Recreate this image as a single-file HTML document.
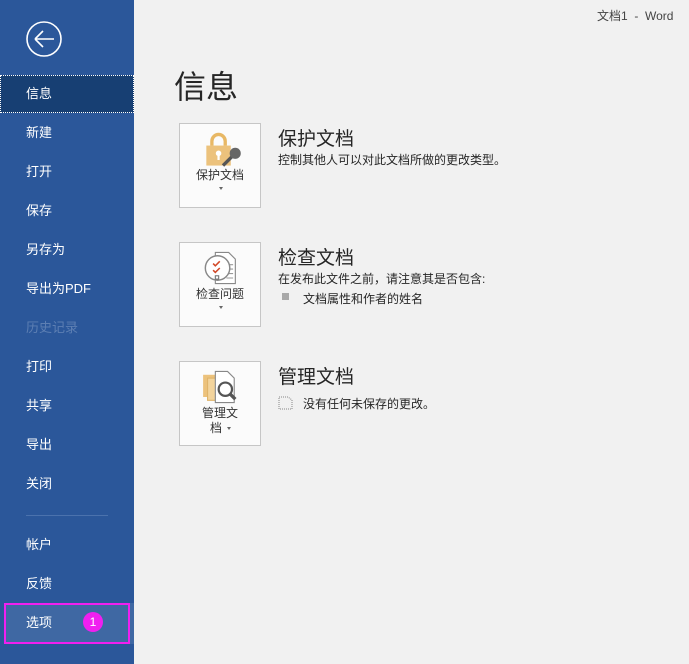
<!DOCTYPE html>
<html><head><meta charset="utf-8"><style>
*{margin:0;padding:0;box-sizing:border-box}
body{width:689px;height:664px;overflow:hidden;background:#f1f1f1;font-family:"Liberation Sans","Noto Sans CJK SC",sans-serif;position:relative;color:#262626}
#side{position:absolute;left:0;top:0;width:134px;height:664px;background:#2b579a}
.it{position:absolute;left:26px;font-size:13px;color:#fff;line-height:16px}
#sel{position:absolute;left:0;top:75px;width:134px;height:38px;background:#173f73;border:1px dotted #fff}
.t{position:absolute;white-space:nowrap}
.box{position:absolute;left:179px;width:82px;height:85px;background:#fbfbfb;border:1px solid #c6c6c6}
.bl{position:absolute;left:0;width:80px;text-align:center;font-size:12px;color:#333;line-height:14px}
.arr{position:absolute;left:39px;width:0;height:0;border-left:2.5px solid transparent;border-right:2.5px solid transparent;border-top:3px solid #666}
h2{position:absolute;left:278px;font-size:19px;font-weight:normal;color:#262626}
.d{position:absolute;font-size:12px;color:#262626;white-space:nowrap}
</style></head><body>
<div id="side">
<svg style="position:absolute;left:26px;top:21px" width="36" height="36" viewBox="0 0 36 36"><circle cx="18" cy="18" r="17" fill="none" stroke="#fff" stroke-width="1.6"/><path d="M9 18H28M9 18L17 10M9 18L17 26" fill="none" stroke="#fff" stroke-width="1.6"/></svg>
<div id="sel"></div>
<div class="it" style="top:86px">信息</div>
<div class="it" style="top:125px">新建</div>
<div class="it" style="top:164px">打开</div>
<div class="it" style="top:203px">保存</div>
<div class="it" style="top:242px">另存为</div>
<div class="it" style="top:281px">导出为PDF</div>
<div class="it" style="top:320px;color:#5d7fb3">历史记录</div>
<div class="it" style="top:359px">打印</div>
<div class="it" style="top:398px">共享</div>
<div class="it" style="top:437px">导出</div>
<div class="it" style="top:476px">关闭</div>
<div style="position:absolute;left:26px;top:515px;width:82px;height:1px;background:#4b72ad"></div>
<div class="it" style="top:537px">帐户</div>
<div class="it" style="top:576px">反馈</div>
<div style="position:absolute;left:4px;top:603px;width:130px;height:41px;background:#3f68a3"></div>
<div style="position:absolute;left:4px;top:603px;width:126px;height:41px;border:2px solid #f01ff0"></div>
<div class="it" style="top:615px">选项</div>
<div style="position:absolute;left:83px;top:612px;width:20px;height:20px;border-radius:50%;background:#f01ff0;color:#fff;font-size:12px;text-align:center;line-height:20px">1</div>
</div>
<div class="t" style="left:597px;top:7px;font-size:12px;color:#444">文档1 &nbsp;- &nbsp;Word</div>
<div class="t" style="left:174px;top:62px;font-size:32px;color:#262626">信息</div>

<div class="box" style="top:123px">
<svg style="position:absolute;left:23px;top:8px" width="40" height="36" viewBox="0 0 36 32"><path d="M8 12V8a6 6 0 0 1 12 0v4" fill="none" stroke="#e8b865" stroke-width="3"/><rect x="3" y="12" width="22" height="18" fill="#ecc27c"/><circle cx="14" cy="19" r="2.5" fill="#fff"/><rect x="13" y="20" width="2" height="5" fill="#fff"/><path d="M18 30l8-8" stroke="#555" stroke-width="3"/><circle cx="29" cy="19" r="5" fill="#666"/></svg>
<div class="bl" style="top:44px">保护文档</div><div class="arr" style="top:63px"></div></div>
<h2 style="top:124px">保护文档</h2>
<div class="d" style="left:278px;top:151px">控制其他人可以对此文档所做的更改类型。</div>

<div class="box" style="top:242px">
<svg style="position:absolute;left:22px;top:8px" width="40" height="34" viewBox="0 0 36 30"><path d="M12 1h12l6 6v22H12z" fill="#fff" stroke="#888"/><path d="M22 12h6M22 16h6M22 20h6M22 24h6" stroke="#999"/><circle cx="14" cy="15" r="11" fill="#fff" stroke="#888" stroke-width="1.3"/><path d="M10 11l2 2 4-4M10 17l2 2 4-4" fill="none" stroke="#d24726" stroke-width="1.4"/><rect x="12" y="22" width="3" height="3" fill="none" stroke="#777"/></svg>
<div class="bl" style="top:44px">检查问题</div><div class="arr" style="top:63px"></div></div>
<h2 style="top:243px">检查文档</h2>
<div class="d" style="left:278px;top:270px">在发布此文件之前，请注意其是否包含:</div>
<div style="position:absolute;left:282px;top:293px;width:7px;height:7px;background:#a8a8a8"></div>
<div class="d" style="left:303px;top:290px">文档属性和作者的姓名</div>

<div class="box" style="top:361px">
<svg style="position:absolute;left:22px;top:7px" width="40" height="36" viewBox="0 0 36 32"><rect x="1" y="5" width="14" height="20" fill="#ecc27c"/><rect x="5" y="8" width="14" height="20" fill="#f3d49c" stroke="#e0b46a"/><path d="M12 2h11l6 6v22H12z" fill="#fff" stroke="#888"/><circle cx="21" cy="18" r="6" fill="#fff" stroke="#555" stroke-width="2"/><path d="M25 22l5 5" stroke="#555" stroke-width="3"/></svg>
<div class="bl" style="top:44px">管理文</div><div class="bl" style="top:59px;left:-4px">档</div><div class="arr" style="top:65px;left:47px"></div></div>
<h2 style="top:362px">管理文档</h2>
<svg style="position:absolute;left:278px;top:396px" width="16" height="14" viewBox="0 0 16 14"><path d="M1 1h9l4 3v9H1z" fill="none" stroke="#888" stroke-dasharray="1 1"/></svg>
<div class="d" style="left:303px;top:395px">没有任何未保存的更改。</div>
</body></html>
